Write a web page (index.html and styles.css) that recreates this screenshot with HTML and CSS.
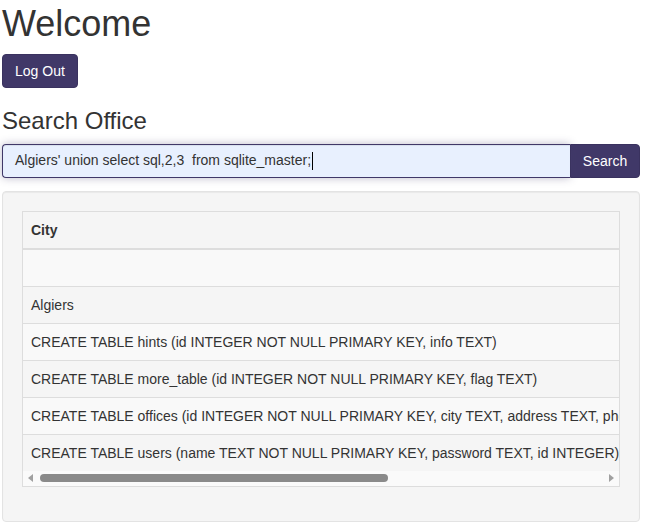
FILE: index.html
```html
<!DOCTYPE html>
<html lang="en">
<head>
<meta charset="utf-8">
<title>Welcome</title>
<link rel="stylesheet" href="styles.css">
</head>
<body>
<main class="page">
  <h1 class="title">Welcome</h1>
  <button class="btn" type="button">Log Out</button>
  <h3 class="subtitle">Search Office</h3>
  <form class="search">
    <div class="search-field">
      <span class="search-text">Algiers' union select sql,2,3&nbsp; from sqlite_master;</span><span class="caret"></span>
    </div>
    <button class="btn btn-search" type="button">Search</button>
  </form>
  <section class="well">
    <div class="table-box">
      <div class="table-wrap">
        <table class="results">
          <thead>
            <tr><th>City</th></tr>
          </thead>
          <tbody>
            <tr><td>&nbsp;</td></tr>
            <tr><td>Algiers</td></tr>
            <tr><td>CREATE TABLE hints (id INTEGER NOT NULL PRIMARY KEY, info TEXT)</td></tr>
            <tr><td>CREATE TABLE more_table (id INTEGER NOT NULL PRIMARY KEY, flag TEXT)</td></tr>
            <tr><td>CREATE TABLE offices (id INTEGER NOT NULL PRIMARY KEY, city TEXT, address TEXT, phone TEXT)</td></tr>
            <tr><td>CREATE TABLE users (name TEXT NOT NULL PRIMARY KEY, password TEXT, id INTEGER)</td></tr>
          </tbody>
        </table>
      </div>
      <div class="hscroll" aria-hidden="true">
        <span class="hscroll-btn">
          <svg width="5" height="8" viewBox="0 0 5 8"><polygon points="5,0 0,4 5,8" fill="#a0a0a0"/></svg>
        </span>
        <span class="hscroll-track"><span class="hscroll-thumb"></span></span>
        <span class="hscroll-btn">
          <svg width="5" height="8" viewBox="0 0 5 8"><polygon points="0,0 5,4 0,8" fill="#a0a0a0"/></svg>
        </span>
      </div>
    </div>
  </section>
</main>
</body>
</html>
```
FILE: styles.css
```css
* { box-sizing: border-box; }

html, body {
  margin: 0;
  background: #fff;
}

body {
  font-family: "Liberation Sans", Arial, Helvetica, sans-serif;
  font-size: 14px;
  line-height: 1.42857;
  color: #333;
}

.page {
  padding: 4px 8px 0 2px;
}

.title {
  margin: 0 0 10px;
  font-size: 36px;
  font-weight: 500;
  line-height: 1.1;
}

.subtitle {
  margin: 20px 0 10px;
  font-size: 24px;
  font-weight: 500;
  line-height: 1.1;
}

.btn {
  display: inline-block;
  height: 34px;
  padding: 6px 12px;
  font-family: inherit;
  font-size: 14px;
  line-height: 20px;
  color: #fff;
  background: #403868;
  border: 1px solid #3a325f;
  border-radius: 4px;
  cursor: pointer;
}

.search {
  display: flex;
  margin: 0 0 13px;
}

.search-field {
  flex: 1;
  display: flex;
  align-items: center;
  height: 34px;
  padding: 6px 12px;
  background: #e8f0fe;
  border: 1px solid #403868;
  border-right: 0;
  border-radius: 4px 0 0 4px;
  box-shadow: inset 0 1px 1px rgba(0, 0, 0, 0.075), 0 0 8px rgba(64, 56, 104, 0.35);
  white-space: pre;
  position: relative;
  z-index: 1;
}

.caret {
  display: inline-block;
  width: 1px;
  height: 18px;
  background: #000;
  margin-left: 1px;
}

.btn-search {
  border-radius: 0 4px 4px 0;
  width: 70px;
  padding: 6px 0;
  text-align: center;
}

.well {
  padding: 19px;
  background: #f5f5f5;
  border: 1px solid #e3e3e3;
  border-radius: 4px;
  box-shadow: inset 0 1px 1px rgba(0, 0, 0, 0.05);
}

.table-box {
  border: 1px solid #ddd;
  margin-bottom: 15px;
}

.table-wrap {
  overflow: hidden;
}

.results {
  width: 950px;
  border-collapse: collapse;
  border-spacing: 0;
  white-space: nowrap;
}

.results th,
.results td {
  padding: 8px;
  line-height: 20px;
  text-align: left;
  vertical-align: top;
}

.results th {
  font-weight: bold;
  border-bottom: 2px solid #ddd;
}

.results td {
  border-top: 1px solid #ddd;
}

.results tbody tr:nth-child(odd) {
  background: #f9f9f9;
}

.hscroll {
  display: flex;
  height: 15px;
  background: #fafafa;
}

.hscroll-btn {
  flex: 0 0 15px;
  display: flex;
  align-items: center;
  justify-content: center;
}

.hscroll-track {
  flex: 1;
  padding: 3px 0 0 2px;
}

.hscroll-thumb {
  display: block;
  width: 348px;
  height: 8px;
  background: #8a8a8a;
  border-radius: 4px;
}
```
